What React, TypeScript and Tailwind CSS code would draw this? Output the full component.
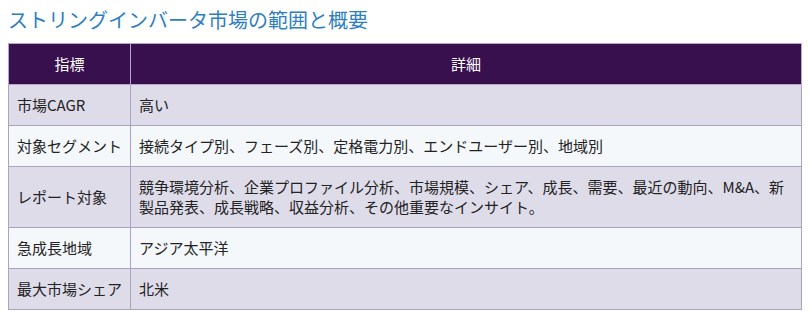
import React from "react";

const rows: [string, string][] = [
  ["市場CAGR", "高い"],
  ["対象セグメント", "接続タイプ別、フェーズ別、定格電力別、エンドユーザー別、地域別"],
  [
    "レポート対象",
    "競争環境分析、企業プロファイル分析、市場規模、シェア、成長、需要、最近の動向、M&A、新製品発表、成長戦略、収益分析、その他重要なインサイト。",
  ],
  ["急成長地域", "アジア太平洋"],
  ["最大市場シェア", "北米"],
];

export default function App() {
  return (
    <div
      className="w-[810px] h-[312px] bg-white px-2 pt-[7px]"
      style={{ fontFamily: '"Noto Sans CJK JP", "Noto Sans", sans-serif' }}
    >
      <h2 className="text-[20px] leading-[26px] text-[#2f7fc0] font-normal m-0">
        ストリングインバータ市場の範囲と概要
      </h2>
      <table className="mt-[10px] w-[794px] border-collapse text-[15px] leading-[20px] text-[#222]">
        <thead>
          <tr className="bg-[#38104e] text-white">
            <th className="w-[122px] h-[41px] border border-[#b3a6cc] font-normal text-center py-0">
              指標
            </th>
            <th className="h-[41px] border border-[#b3a6cc] font-normal text-center py-0">
              詳細
            </th>
          </tr>
        </thead>
        <tbody>
          {rows.map(([k, v], i) => (
            <tr
              key={k}
              className={i % 2 === 0 ? "bg-[#dfdcea]" : "bg-[#f4f8fb]"}
            >
              <td className="border border-[#aaa2c2] px-2 py-[10px] align-middle whitespace-nowrap">
                {k}
              </td>
              <td className="border border-[#aaa2c2] px-2 py-[10px] align-middle">
                {v}
              </td>
            </tr>
          ))}
        </tbody>
      </table>
    </div>
  );
}
